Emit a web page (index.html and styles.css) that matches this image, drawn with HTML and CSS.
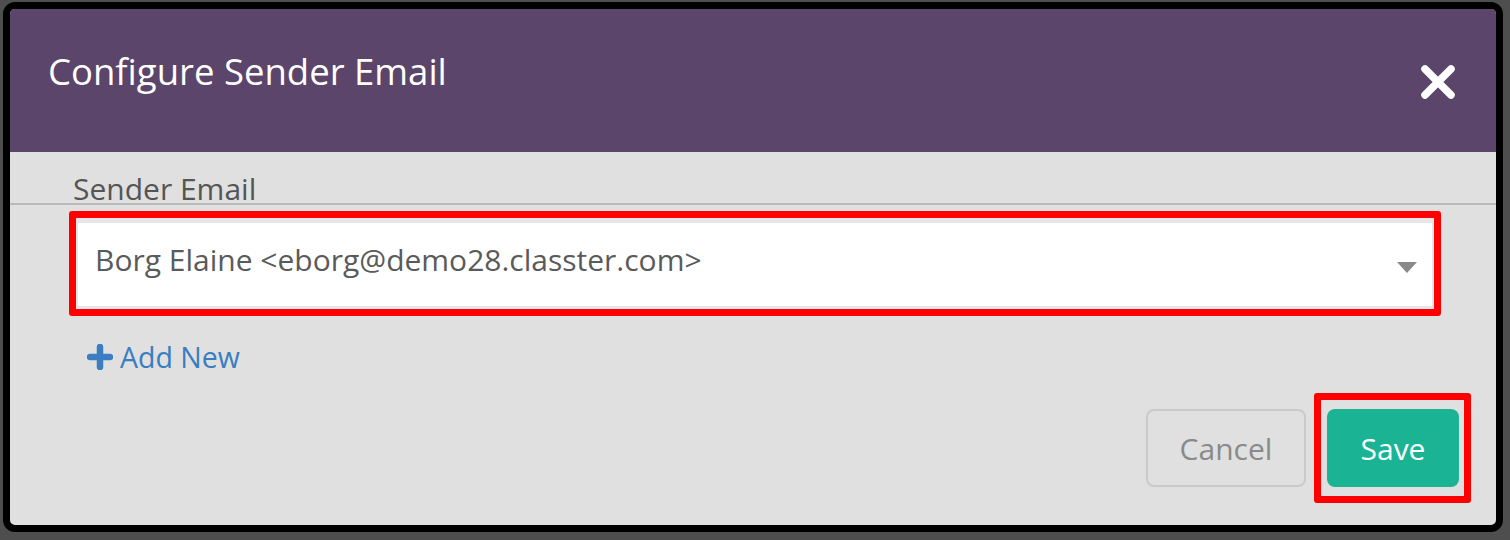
FILE: index.html
```html
<!DOCTYPE html>
<html>
    <head>
        <meta charset="UTF-8">
        <title>Configure Sender Email</title>
        <link rel="stylesheet" href="styles.css">
    </head>
    <body>
        <div class="janela">
            <header class="topo">
                <h1>Configure Sender Email</h1>
                <svg class="fechar" width="36" height="36" viewBox="0 0 36 36">
                    <path d="M5 5 L31 31 M31 5 L5 31" stroke="#fff" stroke-width="7.5" stroke-linecap="round"/>
                </svg>
            </header>
            <div class="corpo">
                <div class="rotulo">Sender Email</div>
                <div class="destaque campo-destaque">
                    <div class="select">
                        <span>Borg Elaine &lt;eborg@demo28.classter.com&gt;</span>
                        <span class="seta"></span>
                    </div>
                </div>
                <div class="adicionar">
                    <svg width="26" height="26" viewBox="0 0 26 26">
                        <path d="M13 3 V23 M3 13 H23" stroke="#3a7dc1" stroke-width="6.5" stroke-linecap="round"/>
                    </svg>
                    <span>Add New</span>
                </div>
                <div class="rodape">
                    <button class="cancelar">Cancel</button>
                    <div class="destaque botao-destaque">
                        <button class="salvar">Save</button>
                    </div>
                </div>
            </div>
        </div>
    </body>
</html>
```

FILE: styles.css
```css
body{
    margin: 0;
    height: 540px;
    overflow: hidden;
    background: #4e4e4e;
    font-family: "Open Sans", sans-serif;
}
.janela{
    box-sizing: border-box;
    width: 1500px;
    height: 530px;
    margin: 2px 0 0 3px;
    border: 7px solid #000;
    border-radius: 12px;
    background: #e0e0e0;
    overflow: hidden;
}
.topo{
    display: flex;
    justify-content: space-between;
    align-items: flex-start;
    box-sizing: border-box;
    height: 143px;
    padding: 38px 40px 0 38px;
    background: #5b456a;
}
.topo h1{
    margin: 0;
    color: #fff;
    font-size: 36.5px;
    font-weight: 400;
    line-height: 49px;
}
.fechar{
    margin-top: 17px;
}
.corpo{
    padding-top: 23px;
}
.rotulo{
    padding-left: 63px;
    font-size: 30px;
    line-height: 28px;
    color: #555;
    border-bottom: 2px solid #b9b9b9;
}
.destaque{
    border: 7px solid #ff0000;
    border-radius: 3px;
}
.campo-destaque{
    height: 91px;
    margin: 6px 55px 0 59px;
}
.select{
    display: flex;
    justify-content: space-between;
    align-items: center;
    box-sizing: border-box;
    height: 91px;
    padding: 0 15px 10px 17px;
    background: #fff;
    border-style: solid;
    border-color: #e5e6e7;
    border-width: 5px 2px 3px 2px;
    border-radius: 3px;
    font-size: 30px;
    color: #5a5a5a;
}
.seta{
    width: 0;
    height: 0;
    margin-top: 16px;
    border-left: 10px solid transparent;
    border-right: 10px solid transparent;
    border-top: 11px solid #8a8a8a;
}
.adicionar{
    display: flex;
    align-items: center;
    gap: 7px;
    margin: 21px 0 0 77px;
    height: 40px;
    font-size: 28.5px;
    color: #3a7dc1;
}
.rodape{
    display: flex;
    justify-content: flex-end;
    align-items: center;
    gap: 8px;
    margin: 16px 25px 0 0;
}
.rodape button{
    box-sizing: border-box;
    height: 78px;
    border-radius: 8px;
    font-family: "Open Sans", sans-serif;
    font-size: 30px;
    cursor: pointer;
}
.cancelar{
    width: 160px;
    background: transparent;
    border: 2px solid #cacaca;
    color: #8a8a8a;
}
.botao-destaque{
    padding: 9px 5px 9px 6px;
}
.salvar{
    width: 132px;
    background: #1ab394;
    border: 0;
    color: #fff;
}
```
